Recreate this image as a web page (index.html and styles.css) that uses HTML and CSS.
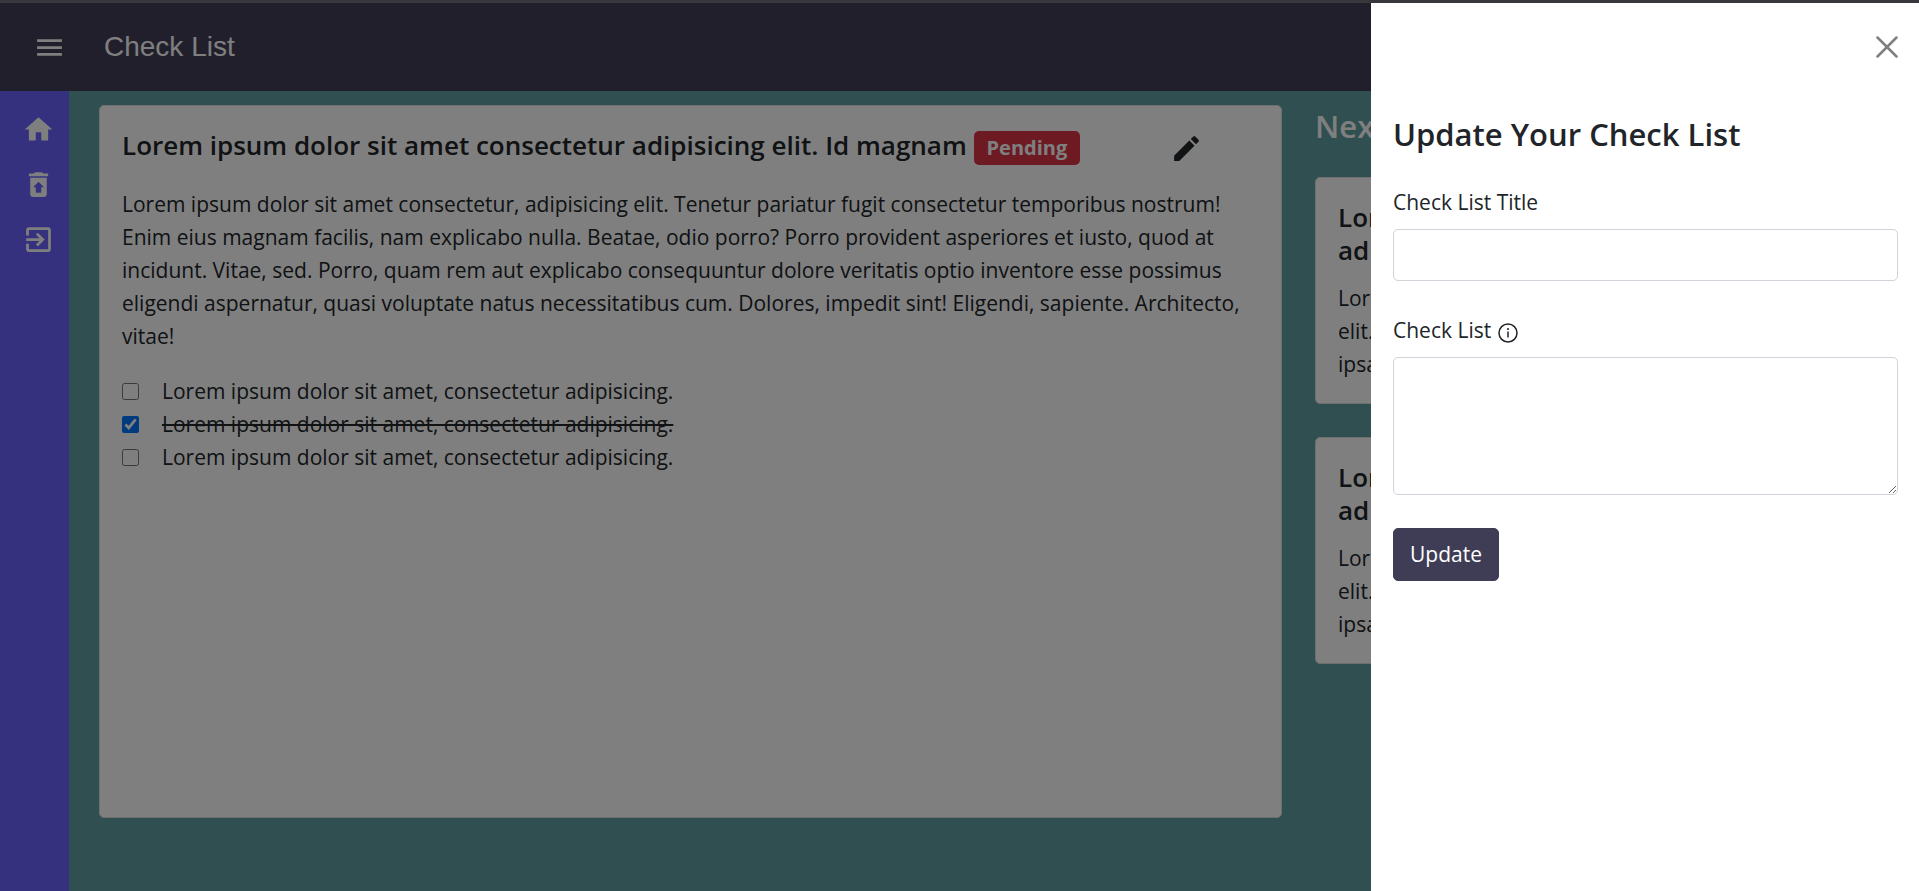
FILE: index.html
```html
<!DOCTYPE html>
<html lang="en">
<head>
<meta charset="utf-8">
<meta name="viewport" content="width=device-width, initial-scale=1">
<title>Check List</title>
<link rel="stylesheet" href="styles.css">
</head>
<body>
<div class="app">
  <header class="topbar">
    <button class="icon-button" type="button" aria-label="Menu">
      <svg class="icon" viewBox="0 0 24 24"><path d="M3 18h18v-2H3v2zm0-5h18v-2H3v2zm0-7v2h18V6H3z"/></svg>
    </button>
    <span class="brand">Check List</span>
  </header>
  <div class="body">
    <nav class="sidebar" aria-label="Main">
      <a href="#home" aria-label="Home"><svg class="icon" viewBox="0 0 24 24"><path d="M10 20v-6h4v6h5v-8h3L12 3 2 12h3v8z"/></svg></a>
      <a href="#trash" aria-label="Trash"><svg class="icon" viewBox="0 0 24 24"><path fill-rule="evenodd" d="M19 4h-3.5l-1-1h-5l-1 1H5v2h14V4zM6 7v12c0 1.1.9 2 2 2h8c1.1 0 2-.9 2-2V7H6zm8 7v4h-4v-4H8l4-4 4 4h-2z"/></svg></a>
      <a href="#logout" aria-label="Log out"><svg class="icon" viewBox="0 0 24 24"><path d="M10.09 15.59 11.5 17l5-5-5-5-1.41 1.41L12.67 11H3v2h9.67l-2.58 2.59zM19 3H5c-1.11 0-2 .9-2 2v4h2V5h14v14H5v-4H3v4c0 1.1.89 2 2 2h14c1.1 0 2-.9 2-2V5c0-1.1-.9-2-2-2z"/></svg></a>
    </nav>
    <main class="content">
      <article class="card card-main">
        <div class="card-head">
          <h2 class="card-title">Lorem ipsum dolor sit amet consectetur adipisicing elit. Id magnam <span class="badge">Pending</span></h2>
          <button class="icon-button" type="button" aria-label="Edit">
            <svg class="icon" viewBox="0 0 24 24"><path d="M3 17.25V21h3.75L17.81 9.94l-3.75-3.75L3 17.25zM20.71 7.04c.39-.39.39-1.02 0-1.41l-2.34-2.34a1 1 0 0 0-1.41 0l-1.83 1.83 3.75 3.75 1.83-1.83z"/></svg>
          </button>
        </div>
        <p class="card-text">Lorem ipsum dolor sit amet consectetur, adipisicing elit. Tenetur pariatur fugit consectetur temporibus nostrum! Enim eius magnam facilis, nam explicabo nulla. Beatae, odio porro? Porro provident asperiores et iusto, quod at incidunt. Vitae, sed. Porro, quam rem aut explicabo consequuntur dolore veritatis optio inventore esse possimus eligendi aspernatur, quasi voluptate natus necessitatibus cum. Dolores, impedit sint! Eligendi, sapiente. Architecto, vitae!</p>
        <ul class="tasks">
          <li><input type="checkbox" id="task1"><label for="task1">Lorem ipsum dolor sit amet, consectetur adipisicing.</label></li>
          <li><input type="checkbox" id="task2" checked><label for="task2">Lorem ipsum dolor sit amet, consectetur adipisicing.</label></li>
          <li><input type="checkbox" id="task3"><label for="task3">Lorem ipsum dolor sit amet, consectetur adipisicing.</label></li>
        </ul>
      </article>
      <section class="next">
        <h2 class="next-title">Next Check List</h2>
        <article class="card">
          <h3 class="card-title">Lorem ipsum dolor sit amet consectetur adipisicing</h3>
          <p class="card-text">Lorem ipsum dolor sit amet consectetur adipisicing elit. Tenetur pariatur fugit consectetur temporibus ipsam nostrum.</p>
        </article>
        <article class="card">
          <h3 class="card-title">Lorem ipsum dolor sit amet consectetur adipisicing</h3>
          <p class="card-text">Lorem ipsum dolor sit amet consectetur adipisicing elit. Tenetur pariatur fugit consectetur temporibus ipsam nostrum.</p>
        </article>
      </section>
    </main>
  </div>
</div>
<div class="backdrop"></div>
<aside class="drawer" role="dialog" aria-labelledby="drawer-title">
  <button class="close" type="button" aria-label="Close">
    <svg viewBox="0 0 22 22"><path d="M1.500 1.500l19 19M20.500 1.500l-19 19"/></svg>
  </button>
  <form class="form">
    <h2 class="drawer-title" id="drawer-title">Update Your Check List</h2>
    <div class="field">
      <label for="title">Check List Title</label>
      <input class="control" type="text" id="title">
    </div>
    <div class="field">
      <label for="items">Check List
        <svg class="info" viewBox="0 0 20 20"><circle cx="10" cy="10" r="9"/><path d="M10 8.500v6M10 5v2"/></svg>
      </label>
      <textarea class="control control-area" id="items"></textarea>
    </div>
    <button class="submit" type="button">Update</button>
  </form>
</aside>
</body>
</html>
```
FILE: styles.css
```css
* { box-sizing: border-box; }

body {
  margin: 0;
  background: #5f9ea0;
  color: #212529;
  font-family: "Open Sans", "Noto Sans", sans-serif;
  font-size: 21px;
  line-height: 33px;
  overflow: hidden;
}

h2, h3, p, ul { margin: 0; }

button { font: inherit; cursor: pointer; }

.app {
  display: flex;
  flex-direction: column;
  min-height: 100vh;
  border-top: 3px solid #707078;
}

.icon {
  display: block;
  width: 33px;
  height: 33px;
  fill: currentColor;
}

.icon-button {
  flex: none;
  padding: 0;
  border: 0;
  background: none;
  color: inherit;
}

.topbar {
  display: flex;
  align-items: center;
  gap: 38px;
  height: 88px;
  padding: 0 33px;
  background: #433e56;
  color: #fff;
}

.brand {
  padding-bottom: 2px;
  font-family: "Liberation Sans", Arial, sans-serif;
  font-size: 28px;
}

.body {
  display: flex;
  flex: 1;
}

.sidebar {
  display: flex;
  flex: none;
  flex-direction: column;
  gap: 22px;
  width: 69px;
  padding: 22px;
  background: #6c63ff;
}

.sidebar a { color: #fff; }

.content {
  display: grid;
  flex: 1;
  grid-template-columns: repeat(12, minmax(0, 1fr));
  gap: 33px;
  align-items: start;
  padding: 14px 29px 33px 30px;
}

.card {
  padding: 23px 22px 22px;
  border: 1px solid #dfdfdf;
  border-radius: 5px;
  background: #fff;
}

.card-main {
  grid-column: span 8;
  min-height: 80vh;
}

.card-head {
  display: flex;
  align-items: flex-end;
  justify-content: space-between;
  margin-bottom: 23px;
  padding-right: 56px;
}

.card-title {
  margin-bottom: 15px;
  font-size: 26px;
  font-weight: 600;
  line-height: 33px;
}

.card-head .card-title { margin: 0; }

.badge {
  display: inline-block;
  padding: 7px 13px;
  border-radius: 5px;
  background: #dc3545;
  color: #fff;
  font-size: 20px;
  font-weight: 700;
  line-height: 20px;
}

.tasks {
  margin-top: 22px;
  padding: 0;
  list-style: none;
}

.tasks li {
  display: flex;
  align-items: center;
  gap: 23px;
}

.tasks input {
  width: 17px;
  height: 17px;
  margin: 0;
  accent-color: #0075ff;
}

.tasks input:checked + label { text-decoration: line-through 2px; }

.next {
  display: flex;
  flex-direction: column;
  grid-column: span 4;
  gap: 33px;
}

.next-title {
  padding-top: 3px;
  color: #fff;
  font-size: 31px;
  font-weight: 600;
  line-height: 36px;
}

.backdrop {
  position: fixed;
  inset: 0;
  background: rgba(0, 0, 0, 0.5);
}

.drawer {
  position: fixed;
  top: 3px;
  right: 0;
  bottom: 0;
  display: flex;
  flex-direction: column;
  width: 548px;
  padding: 33px 21px 33px 22px;
  background: #fff;
}

.close {
  align-self: flex-end;
  width: 22px;
  height: 22px;
  padding: 0;
  border: 0;
  background: none;
}

.close svg {
  display: block;
  fill: none;
  stroke: #7f7f7f;
  stroke-width: 2.5;
  stroke-linecap: round;
}

.form {
  display: flex;
  flex-direction: column;
  align-items: flex-start;
  gap: 33px;
  margin-top: 57px;
}

.drawer-title {
  margin-bottom: -1px;
  font-size: 31px;
  font-weight: 600;
  line-height: 39px;
}

.field {
  display: flex;
  flex-direction: column;
  gap: 10px;
  width: 100%;
}

.control {
  display: block;
  width: 100%;
  height: 52px;
  padding: 8px 16px;
  border: 1px solid #ced4da;
  border-radius: 5px;
  background: #fff;
  color: inherit;
  font: inherit;
}

.control-area {
  height: 138px;
  resize: vertical;
}

.info {
  width: 20px;
  height: 20px;
  margin-left: 1px;
  vertical-align: -5px;
  fill: none;
  stroke: currentColor;
  stroke-width: 1.5;
}

.submit {
  padding: 9px 16px;
  border: 1px solid #3f3d56;
  border-radius: 5px;
  background: #3f3d56;
  color: #fff;
}
```
